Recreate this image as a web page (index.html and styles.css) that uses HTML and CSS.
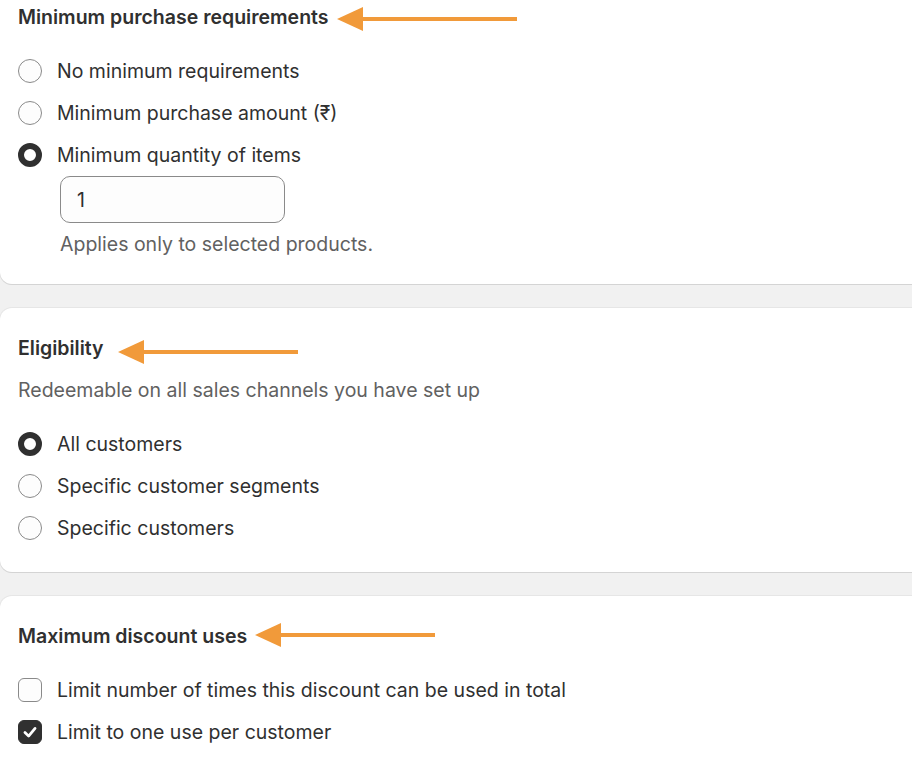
FILE: index.html
```html
<!DOCTYPE html>
<html lang="en">
<head>
    <meta charset="UTF-8">
    <meta name="viewport" content="width=device-width, initial-scale=1.0">
    <title>Discount settings</title>
    <link rel="stylesheet" href="styles.css">
</head>
<body>
    <div class="page">
        <!-- Minimum purchase requirements -->
        <section class="card card-first">
            <div class="card-head">
                <h2>Minimum purchase requirements</h2>
                <svg class="arrow arrow-1" viewBox="0 0 180 26"><path d="M20 13 L180 13" stroke="#f19a3a" stroke-width="4"/><polygon points="0,13 26,1 26,25" fill="#f19a3a"/></svg>
            </div>
            <div class="options">
                <label class="option"><span class="radio"></span>No minimum requirements</label>
                <label class="option"><span class="radio"></span>Minimum purchase amount (₹)</label>
                <label class="option"><span class="radio checked"></span>Minimum quantity of items</label>
            </div>
            <div class="nested">
                <div class="field">1</div>
                <p class="help">Applies only to selected products.</p>
            </div>
        </section>

        <!-- Eligibility -->
        <section class="card">
            <div class="card-head">
                <h2>Eligibility</h2>
                <svg class="arrow arrow-2" viewBox="0 0 180 26"><path d="M20 13 L180 13" stroke="#f19a3a" stroke-width="4"/><polygon points="0,13 26,1 26,25" fill="#f19a3a"/></svg>
            </div>
            <p class="subdued">Redeemable on all sales channels you have set up</p>
            <div class="options">
                <label class="option"><span class="radio checked"></span>All customers</label>
                <label class="option"><span class="radio"></span>Specific customer segments</label>
                <label class="option"><span class="radio"></span>Specific customers</label>
            </div>
        </section>

        <!-- Maximum discount uses -->
        <section class="card">
            <div class="card-head">
                <h2>Maximum discount uses</h2>
                <svg class="arrow arrow-3" viewBox="0 0 180 26"><path d="M20 13 L180 13" stroke="#f19a3a" stroke-width="4"/><polygon points="0,13 26,1 26,25" fill="#f19a3a"/></svg>
            </div>
            <div class="options">
                <label class="option"><span class="checkbox"></span>Limit number of times this discount can be used in total</label>
                <label class="option"><span class="checkbox checked"><svg viewBox="0 0 24 24"><path d="M6.5 12.5 L10.5 16.5 L17.5 8" fill="none" stroke="#fff" stroke-width="3" stroke-linecap="round" stroke-linejoin="round"/></svg></span>Limit to one use per customer</label>
            </div>
        </section>
    </div>
</body>
</html>
```

FILE: styles.css
```css
/* Basic Reset */
* {
    margin: 0;
    padding: 0;
    box-sizing: border-box;
}

body {
    font-family: Inter, "Noto Sans", Arial, sans-serif;
    background-color: #f1f1f1;
    color: #303030;
    font-size: 19.5px;
    overflow: hidden;
}

.page {
    display: flex;
    flex-direction: column;
    gap: 24px;
    margin-top: -23px;
}

.card {
    background-color: #fff;
    border-radius: 12px 0 0 12px;
    padding: 28px 18px 29px;
    box-shadow: 0 1px 0 #d4d4d4, 0 0 0 1px #e6e6e6;
    margin-right: -20px;
}

.card-head {
    display: flex;
    align-items: center;
    height: 24px;
}

h2 {
    font-size: 19.5px;
    font-weight: 600;
    line-height: 24px;
}

.arrow {
    width: 180px;
    height: 26px;
    flex-shrink: 0;
}

.arrow-1 {
    margin-left: 8px;
    margin-top: 3px;
}

.arrow-2 {
    margin-left: 14px;
    margin-top: 8px;
}

.arrow-3 {
    margin-left: 8px;
    margin-top: -2px;
}

.subdued {
    color: #616161;
    line-height: 24px;
    margin-top: 18px;
}

.options {
    display: flex;
    flex-direction: column;
    gap: 12px;
    margin-top: 27px;
}

.option {
    display: flex;
    align-items: center;
    gap: 15px;
    height: 30px;
    line-height: 24px;
}

.radio {
    width: 24px;
    height: 24px;
    border-radius: 50%;
    border: 1.5px solid #8a8a8a;
    background-color: #fdfdfd;
    flex-shrink: 0;
}

.radio.checked {
    border: 6px solid #303030;
    background-color: #fff;
}

.checkbox {
    width: 24px;
    height: 24px;
    border-radius: 6px;
    border: 1.5px solid #8a8a8a;
    background-color: #fdfdfd;
    flex-shrink: 0;
    display: flex;
}

.checkbox.checked {
    background-color: #303030;
    border-color: #303030;
}

.checkbox svg {
    width: 100%;
    height: 100%;
}

.nested {
    margin-left: 42px;
    margin-top: 6px;
}

.field {
    width: 225px;
    height: 47px;
    border: 1px solid #8a8a8a;
    border-radius: 10px;
    background-color: #fdfdfd;
    padding: 0 16px;
    display: flex;
    align-items: center;
}

.help {
    color: #616161;
    line-height: 22px;
    margin-top: 10px;
}
```
